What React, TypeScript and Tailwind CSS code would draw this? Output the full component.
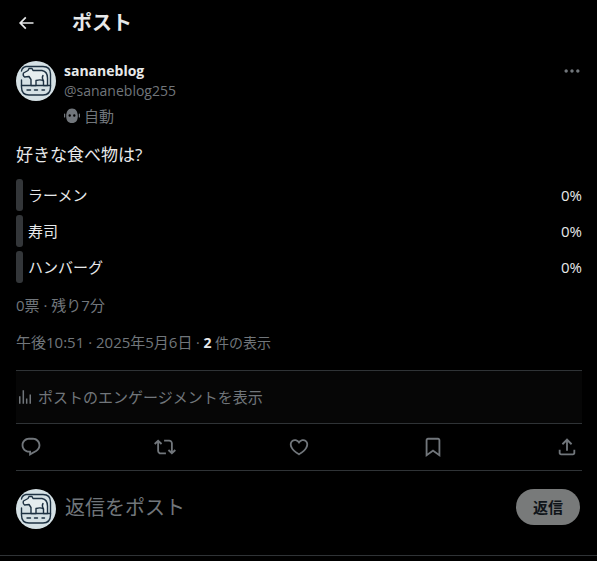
interface PollChoice {
  label: string;
  percent: number;
}

const choices: PollChoice[] = [
  { label: 'ラーメン', percent: 0 },
  { label: '寿司', percent: 0 },
  { label: 'ハンバーグ', percent: 0 },
];

const paths = {
  back: 'M7.414 13l5.043 5.04-1.414 1.42L3.586 12l7.457-7.46 1.414 1.42L7.414 11H21v2H7.414z',
  more: 'M3 12c0-1.1.9-2 2-2s2 .9 2 2-.9 2-2 2-2-.9-2-2zm9 2c1.1 0 2-.9 2-2s-.9-2-2-2-2 .9-2 2 .9 2 2 2zm7 0c1.1 0 2-.9 2-2s-.9-2-2-2-2 .9-2 2 .9 2 2 2z',
  chart: 'M8.75 21V3h2v18h-2zM18 21V8.5h2V21h-2zM4 21l.004-10h2L6 21H4zm9.248 0v-7h2v7h-2z',
  reply: 'M1.751 10c0-4.42 3.584-8 8.005-8h4.366c4.49 0 8.129 3.64 8.129 8.13 0 2.96-1.607 5.68-4.196 7.11l-8.054 4.46v-3.69h-.067c-4.49.1-8.183-3.51-8.183-8.01zm8.005-6c-3.317 0-6.005 2.69-6.005 6 0 3.37 2.77 6.08 6.138 6.01l.351-.01h1.761v2.3l5.087-2.81c1.951-1.08 3.163-3.13 3.163-5.36 0-3.39-2.744-6.13-6.129-6.13H9.756z',
  repost: 'M4.5 3.88l4.432 4.14-1.364 1.46L5.5 7.55V16c0 1.1.896 2 2 2H13v2H7.5c-2.209 0-4-1.79-4-4V7.55L1.432 9.48.068 8.02 4.5 3.88zM16.5 6H11V4h5.5c2.209 0 4 1.79 4 4v8.45l2.068-1.93 1.364 1.46-4.432 4.14-4.432-4.14 1.364-1.46 2.068 1.93V8c0-1.1-.896-2-2-2z',
  like: 'M16.697 5.5c-1.222-.06-2.679.51-3.89 2.16l-.805 1.09-.806-1.09C9.984 6.01 8.526 5.44 7.304 5.5c-1.243.07-2.349.78-2.91 1.91-.552 1.12-.633 2.78.479 4.82 1.074 1.97 3.257 4.27 7.129 6.61 3.87-2.34 6.052-4.64 7.126-6.61 1.111-2.04 1.03-3.7.477-4.82-.561-1.13-1.666-1.84-2.908-1.91zm4.187 7.69c-1.351 2.48-4.001 5.12-8.379 7.67l-.503.3-.504-.3c-4.379-2.55-7.029-5.19-8.382-7.67-1.36-2.5-1.41-4.86-.514-6.67.887-1.79 2.647-2.91 4.601-3.01 1.651-.09 3.368.56 4.798 2.01 1.429-1.45 3.146-2.1 4.796-2.01 1.954.1 3.714 1.22 4.601 3.01.896 1.81.846 4.17-.514 6.67z',
  bookmark: 'M4 4.5C4 3.12 5.119 2 6.5 2h11C18.881 2 20 3.12 20 4.5v18.44l-8-5.71-8 5.71V4.5zM6.5 4c-.276 0-.5.22-.5.5v14.56l6-4.29 6 4.29V4.5c0-.28-.224-.5-.5-.5h-11z',
  share: 'M12 2.59l5.7 5.7-1.41 1.42L13 6.41V16h-2V6.41l-3.3 3.3-1.41-1.42L12 2.59zM21 15l-.02 3.51c0 1.38-1.12 2.49-2.5 2.49H5.5C4.11 21 3 19.88 3 18.5V15h2v3.5c0 .28.22.5.5.5h12.98c.28 0 .5-.22.5-.5L19 15h2z',
};

function Icon({ name, className }: { name: keyof typeof paths; className: string }) {
  return (
    <svg viewBox="0 0 24 24" fill="currentColor" className={className} aria-hidden="true">
      <path d={paths[name]} />
    </svg>
  );
}

function Avatar() {
  return (
    <svg viewBox="0 0 40 40" className="w-10 h-10 shrink-0" role="img" aria-label="sananeblog">
      <circle cx="20" cy="20" r="20" fill="#d5e1e5" />
      <g fill="none" stroke="#1d3142" strokeWidth="1.4" strokeLinecap="round" strokeLinejoin="round">
        <path d="M10 5.500H27Q34.500 5.500 34.500 13V26Q34.500 34 27 34H13Q5.500 34 5.500 26V19M5.500 10Q6 6.500 10 5.500" />
        <path d="M5.500 24.500H34.500" />
        <path d="M15 24.500V18.500L13 15.500L8.500 16Q6.500 14.500 7.500 12L12 9.500L13 7.500L16 7.500L17 9.500H26Q31.500 10.500 31.500 17V24.500H27.500V20Q25 18 20 19.500V24.500Z" fill="#e5edef" />
        <path d="M27.500 20Q25.500 16.500 27 14.500" />
        <path d="M11 29H14.500M18.500 29H21.500M26 29H28.500" />
      </g>
    </svg>
  );
}

function BotIcon() {
  return (
    <svg viewBox="0 0 16 16" className="w-4 h-4 shrink-0" fill="#71767b" aria-hidden="true">
      <path fillRule="evenodd" d="M8 .5C4 .5 2.200 4 2.200 8C2.200 12.500 4 15 8 15S13.800 12.500 13.800 8C13.800 4 12 .5 8 .5ZM5.700 6.300a1.200 1.200 0 1 1 0 2.400a1.200 1.200 0 0 1 0-2.400ZM10.300 6.300a1.200 1.200 0 1 1 0 2.400a1.200 1.200 0 0 1 0-2.400Z" />
      <rect x="0" y="5.500" width="1.200" height="4" rx=".6" />
      <rect x="14.800" y="5.500" width="1.200" height="4" rx=".6" />
    </svg>
  );
}

export default function App() {
  return (
    <div className="min-h-screen bg-black text-[#e7e9ea] text-[15px] leading-5 font-['Open_Sans','Noto_Sans_CJK_JP',sans-serif]">
      <header className="flex items-center h-[46px] px-4">
        <button aria-label="戻る" className="w-5 h-5">
          <Icon name="back" className="w-5 h-5" />
        </button>
        <h1 className="ml-9 text-xl leading-6 font-bold">ポスト</h1>
      </header>

      <main>
        <article className="pl-4 pr-[15px] pt-[15px]">
          <div className="flex items-start gap-2">
            <Avatar />
            <div className="grow min-w-0">
              <div className="font-bold text-sm leading-5">sananeblog</div>
              <a href="#profile" className="block w-fit text-sm leading-5 text-[#71767b]">@sananeblog255</a>
              <div className="flex items-center gap-1 mt-[5px] text-[#71767b]">
                <BotIcon />
                <span>自動</span>
              </div>
            </div>
            <button aria-label="もっと見る" className="text-[#71767b]">
              <Icon name="more" className="w-5 h-5" />
            </button>
          </div>

          <p className="mt-[17px] text-[17px] leading-6">好きな食べ物は?</p>

          <ul className="flex flex-col gap-1 mt-3">
            {choices.map((choice) => (
              <li key={choice.label} className="flex items-center h-8">
                <div className="w-[7px] h-8 mr-[5px] rounded-[3px] bg-[#333639]" />
                <span className="grow">{choice.label}</span>
                <span>{choice.percent}%</span>
              </li>
            ))}
          </ul>

          <div className="mt-3 text-[#71767b]">0票 · 残り7分</div>

          <div className="mt-[17px] text-sm leading-5 text-[#71767b]">
            <time dateTime="2025-05-06T22:51" className="text-[15px]">午後10:51 · 2025年5月6日</time>
            {' · '}
            <span className="font-bold text-[#e7e9ea]">2</span> 件の表示
          </div>

          <a href="#analytics" className="flex items-center gap-1 h-[54px] mt-[17px] border-y border-[#2f3336] bg-[#060606] text-[#71767b]">
            <Icon name="chart" className="w-[18px] h-[18px]" />
            <span>ポストのエンゲージメントを表示</span>
          </a>

          <div className="flex items-center justify-between h-[47px] px-1 border-b border-[#2f3336] text-[#71767b]">
            <button aria-label="返信する"><Icon name="reply" className="w-[22px] h-[22px]" /></button>
            <button aria-label="リポスト"><Icon name="repost" className="w-[22px] h-[22px]" /></button>
            <button aria-label="いいね"><Icon name="like" className="w-[22px] h-[22px]" /></button>
            <button aria-label="ブックマーク"><Icon name="bookmark" className="w-[22px] h-[22px]" /></button>
            <button aria-label="共有"><Icon name="share" className="w-[22px] h-[22px]" /></button>
          </div>
        </article>

        <form className="flex items-start pl-4 pr-[17px] pt-[18px] pb-[26px] border-b border-[#2f3336]">
          <Avatar />
          <input
            type="text"
            aria-label="返信をポスト"
            placeholder="返信をポスト"
            className="grow min-w-0 h-9 ml-[9px] bg-transparent text-xl outline-none placeholder:text-[#71767b]"
          />
          <button type="button" className="w-16 h-9 rounded-full bg-[#787a7a] text-[#0f1419] font-bold">返信</button>
        </form>
      </main>
    </div>
  );
}
